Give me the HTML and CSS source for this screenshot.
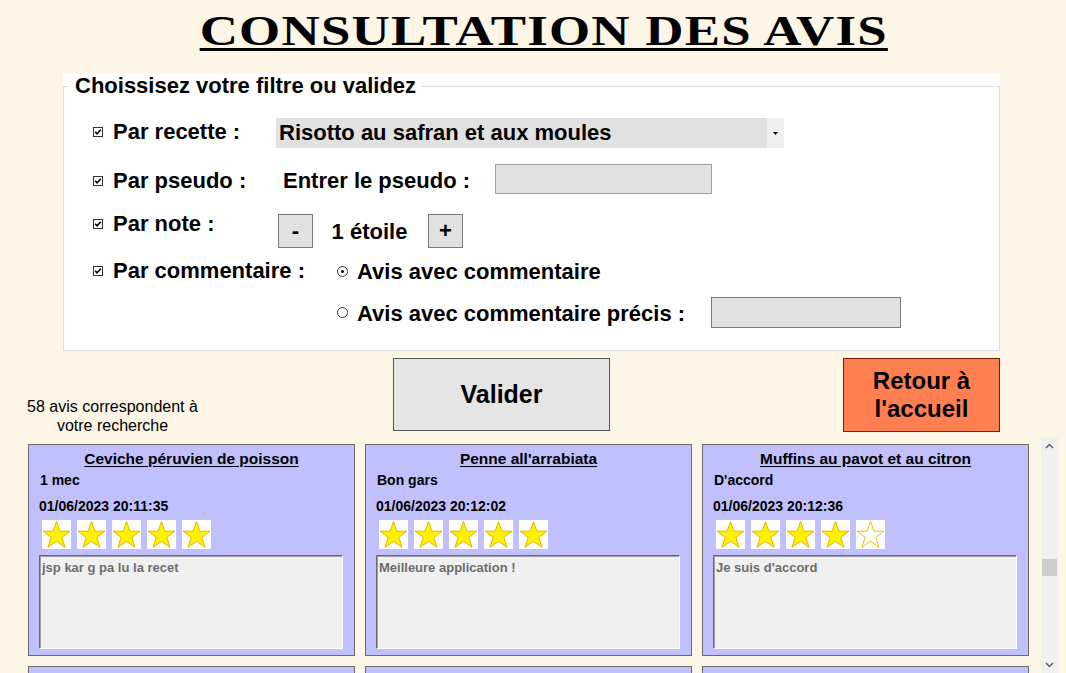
FILE: index.html
```html
<!DOCTYPE html>
<html lang="fr">
<head>
<meta charset="utf-8">
<title>Consultation des avis</title>
<link rel="stylesheet" href="styles.css">
</head>
<body>
<svg class="defs" aria-hidden="true">
  <symbol id="star" viewBox="0 0 29 29">
    <polygon points="14.5,1.5 17.9,11.2 28,11.2 19.9,17.3 23,27.3 14.5,21.3 6,27.3 9.1,17.3 1,11.2 11.1,11.2" />
  </symbol>
  <symbol id="tick" viewBox="0 0 10 10">
    <rect x="0.5" y="0.5" width="9" height="9" fill="#fff" stroke="#333" />
    <polyline points="2.2,4.8 4,6.8 7.8,2.8" fill="none" stroke="#000" stroke-width="1.6" />
  </symbol>
</svg>

<header class="header">
  <h1 class="title">Consultation des avis</h1>
</header>

<section class="filters">
  <fieldset class="filter-box">
    <legend class="filter-legend">Choissisez votre filtre ou validez</legend>

    <div class="row row-recette">
      <label class="check-label"><svg class="check"><use href="#tick"/></svg><span>Par recette :</span></label>
      <div class="select">
        <span class="select-value">Risotto au safran et aux moules</span>
        <span class="select-arrow"><svg width="5" height="3" viewBox="0 0 5 3"><polygon points="0,0 5,0 2.5,3" fill="#000"/></svg></span>
      </div>
    </div>

    <div class="row row-pseudo">
      <label class="check-label"><svg class="check"><use href="#tick"/></svg><span>Par pseudo :</span></label>
      <span class="field-label">Entrer le pseudo :</span>
      <span class="input input-pseudo"></span>
    </div>

    <div class="row row-note">
      <label class="check-label"><svg class="check"><use href="#tick"/></svg><span>Par note :</span></label>
      <div class="stepper">
        <span class="btn-step">-</span>
        <span class="step-value">1 étoile</span>
        <span class="btn-step">+</span>
      </div>
    </div>

    <div class="row row-comment">
      <label class="check-label check-label-wide"><svg class="check"><use href="#tick"/></svg><span>Par commentaire :</span></label>
      <div class="options">
        <div class="option"><span class="radio radio-on"></span><span>Avis avec commentaire</span></div>
        <div class="option option-precise"><span class="radio"></span><span class="option-text">Avis avec commentaire précis :</span><span class="input input-precise"></span></div>
      </div>
    </div>
  </fieldset>
</section>

<section class="actions">
  <p class="count">58 avis correspondent à<br>votre recherche</p>
  <button class="btn btn-valider">Valider</button>
  <button class="btn btn-retour">Retour à<br>l'accueil</button>
</section>

<section class="panel">
  <div class="cards">
    <article class="card">
      <h2 class="card-title">Ceviche péruvien de poisson</h2>
      <p class="card-user">1 mec</p>
      <p class="card-date">01/06/2023 20:11:35</p>
      <div class="stars">
        <svg class="star"><use href="#star"/></svg><svg class="star"><use href="#star"/></svg><svg class="star"><use href="#star"/></svg><svg class="star"><use href="#star"/></svg><svg class="star"><use href="#star"/></svg>
      </div>
      <div class="comment">jsp kar g pa lu la recet</div>
    </article>
    <article class="card">
      <h2 class="card-title">Penne all'arrabiata</h2>
      <p class="card-user">Bon gars</p>
      <p class="card-date">01/06/2023 20:12:02</p>
      <div class="stars">
        <svg class="star"><use href="#star"/></svg><svg class="star"><use href="#star"/></svg><svg class="star"><use href="#star"/></svg><svg class="star"><use href="#star"/></svg><svg class="star"><use href="#star"/></svg>
      </div>
      <div class="comment">Meilleure application !</div>
    </article>
    <article class="card">
      <h2 class="card-title">Muffins au pavot et au citron</h2>
      <p class="card-user">D'accord</p>
      <p class="card-date">01/06/2023 20:12:36</p>
      <div class="stars">
        <svg class="star"><use href="#star"/></svg><svg class="star"><use href="#star"/></svg><svg class="star"><use href="#star"/></svg><svg class="star"><use href="#star"/></svg><svg class="star star-empty"><use href="#star"/></svg>
      </div>
      <div class="comment">Je suis d'accord</div>
    </article>
    <article class="card"></article>
    <article class="card"></article>
    <article class="card"></article>
  </div>
  <div class="scrollbar" aria-hidden="true">
    <span class="scroll-btn"><svg width="9" height="6" viewBox="0 0 9 6"><polyline points="1,5 4.5,1.5 8,5" fill="none" stroke="#606060" stroke-width="1.5"/></svg></span>
    <span class="scroll-track"><span class="scroll-thumb"></span></span>
    <span class="scroll-btn"><svg width="9" height="6" viewBox="0 0 9 6"><polyline points="1,1 4.5,4.5 8,1" fill="none" stroke="#606060" stroke-width="1.5"/></svg></span>
  </div>
</section>
</body>
</html>
```

FILE: styles.css
```css
* { box-sizing: border-box; }

body {
  margin: 0;
  width: 1066px;
  height: 673px;
  overflow: hidden;
  background: #fdf5e6;
  color: #000;
  font-family: "Liberation Sans", Arial, sans-serif;
}

.defs { display: block; width: 0; height: 0; overflow: hidden; }

/* Header */
.header {
  height: 74px;
  padding: 4px 0 0 22px;
  text-align: center;
}
.title {
  display: inline-block;
  margin: 0;
  font-family: "Liberation Serif", "Times New Roman", serif;
  font-weight: bold;
  font-size: 43px;
  line-height: 54px;
  text-transform: uppercase;
  letter-spacing: 1px;
  text-decoration: underline;
  text-decoration-thickness: 3px;
  text-underline-offset: 3px;
  transform: scaleX(1.23);
}

/* Filters group box */
.filters {
  margin-left: 63px;
  width: 937px;
  height: 277px;
  background: #fff;
}
.filter-box {
  margin: 0;
  padding: 0;
  height: 277px;
  border: 1px solid #dcdcdc;
  font-size: 22px;
  font-weight: bold;
}
.filter-legend {
  margin-left: 4px;
  padding: 0 5px 0 7px;
  line-height: 24px;
}

.row {
  display: flex;
  align-items: flex-start;
  padding-left: 29px;
  line-height: 24px;
  white-space: nowrap;
}
.check-label {
  flex: none;
  width: 183px;
  display: flex;
  align-items: center;
  gap: 10px;
}
.check-label-wide { width: 244px; }
.check { width: 10px; height: 10px; flex: none; }

.row-recette { margin-top: 20px; height: 30px; }
.row-recette .check-label { margin-top: 1.5px; }
.select {
  width: 508px;
  height: 30px;
  display: flex;
  background: #e1e1e1;
}
.select-value {
  flex: 1;
  padding-left: 3px;
  line-height: 30px;
}
.select-arrow {
  width: 17px;
  background: #f0f0f0;
  display: flex;
  align-items: center;
  justify-content: center;
}

.row-pseudo { margin-top: 16px; height: 30px; }
.row-pseudo .check-label { margin-top: 5px; }
.field-label {
  width: 212px;
  margin-left: 7px;
  margin-top: 5px;
}
.input {
  display: block;
  background: #e1e1e1;
  border: 1px solid #7a7a7a;
}
.input-pseudo { width: 217px; height: 30px; border-color: #a0a0a0; }

.row-note { margin-top: 17.5px; }
.stepper {
  display: flex;
  align-items: center;
  margin-left: 2px;
  margin-top: 2.5px;
}
.btn-step {
  width: 35px;
  height: 34px;
  display: flex;
  align-items: center;
  justify-content: center;
  background: #e1e1e1;
  border: 1px solid #7a7a7a;
}
.step-value {
  width: 115px;
  text-align: center;
  padding: 2px 2px 0 0;
}

.row-comment { margin-top: 11px; }
.options { display: flex; flex-direction: column; }
.option {
  display: flex;
  align-items: center;
  height: 24px;
}
.option > span:last-child { padding-top: 2px; }
.option-precise { margin-top: 14px; height: 31px; }
.option-precise > .option-text { padding-top: 2px; }
.option-precise > span:last-child { padding-top: 0; }
.option-text { width: 354px; }
.input-precise { width: 190px; height: 31px; }
.radio {
  width: 11px;
  height: 11px;
  margin-right: 9px;
  border: 1px solid #333;
  border-radius: 50%;
  background: #fff;
  display: flex;
  align-items: center;
  justify-content: center;
  flex: none;
}
.radio-on::after {
  content: "";
  width: 3px;
  height: 3px;
  border-radius: 50%;
  background: #000;
}

/* Actions */
.actions {
  display: flex;
  align-items: flex-start;
  height: 74px;
  margin-top: 7px;
}
.count {
  width: 185px;
  margin: 39px 0 0 20px;
  font-size: 16px;
  line-height: 19px;
  text-align: center;
}
.btn {
  font-family: "Liberation Sans", Arial, sans-serif;
  font-weight: bold;
  font-size: 24px;
  color: #000;
  padding: 0;
}
.btn-valider {
  margin-left: 188px;
  width: 217px;
  height: 73px;
  font-size: 25px;
  background: #e5e5e5;
  border: 1px solid #555;
}
.btn-retour {
  margin-left: 233px;
  width: 157px;
  height: 74px;
  line-height: 28px;
  background: #ff7f50;
  border: 1px solid #7d1e00;
}

/* Cards panel */
.panel {
  display: flex;
  height: 236px;
  margin-top: 5px;
  overflow: hidden;
}
.cards {
  margin-left: 28px;
  width: 1001px;
  padding-top: 7px;
  display: grid;
  grid-template-columns: repeat(3, 327px);
  grid-auto-rows: 212px;
  gap: 10px;
}
.card {
  background: #c0c0ff;
  border: 1px solid #6b6b6b;
  padding: 5px 10px 0 10px;
  font-weight: bold;
}
.card-title {
  margin: 0;
  font-size: 15.5px;
  line-height: 18px;
  text-align: center;
  text-decoration: underline;
  text-underline-offset: 2px;
}
.card-user {
  margin: 3.7px 0 0;
  font-size: 14px;
  line-height: 16px;
  padding-left: 1px;
}
.card-date {
  margin: 10.7px 0 0;
  font-size: 14px;
  line-height: 16px;
}
.stars {
  display: flex;
  gap: 6px;
  margin: 5.9px 0 0 3px;
}
.star {
  width: 29px;
  height: 29px;
  background: #fff;
  fill: #fff200;
  stroke: #e6b400;
  stroke-width: 1;
}
.star-empty { fill: #fff; stroke: #f0c000; }
.comment {
  margin-top: 6px;
  width: 304px;
  height: 94px;
  padding: 4px 2px;
  background: #f0f0f0;
  border: 1px solid;
  border-color: #696969 #fff #fff #696969;
  box-shadow: inset 1px 1px #a0a0a0;
  color: #6d6d6d;
  font-size: 13px;
  line-height: 15px;
}

.scrollbar {
  margin-left: 12px;
  width: 17px;
  height: 236px;
  background: #f0f0f0;
  display: flex;
  flex-direction: column;
}
.scroll-btn {
  height: 17px;
  display: flex;
  align-items: center;
  justify-content: center;
}
.scroll-track { flex: 1; }
.scroll-thumb {
  display: block;
  margin: 105px 1px 0;
  height: 17px;
  background: #cdcdcd;
}
```
